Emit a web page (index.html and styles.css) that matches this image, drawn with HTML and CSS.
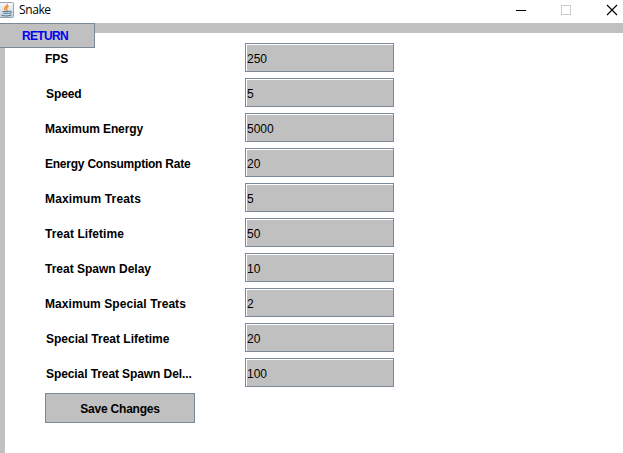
FILE: index.html
```html
<!DOCTYPE html>
<html lang="en">
<head>
<meta charset="utf-8">
<title>Snake</title>
<link rel="stylesheet" href="styles.css">
</head>
<body>
<header class="titlebar">
  <svg class="app-icon" width="14" height="17" viewBox="0 0 14 17">
    <defs><linearGradient id="tile" x2="0" y2="1"><stop stop-color="#f8fafb"/><stop offset="1" stop-color="#c4d0dc"/></linearGradient></defs>
    <path d="M0 .5H12.5Q13.5 .5 13.5 1.5V14.5Q13.5 15.5 12.5 15.5H0" fill="url(#tile)" stroke="#93a3b3"/>
    <path d="M7.2 2Q7.8 3.5 5.4 4.9Q3.6 6.3 5.6 8.3M8.7 4.3Q5.2 5.8 6.9 7.2Q7.5 8 6.5 8.7" fill="none" stroke="#ee8524" stroke-width="1.2"/>
    <path d="M2.5 9.5H9M3.3 11.3H8.6M9 9.3Q11.8 8.8 11 10.5Q10.4 11.6 8.9 11.8M1.5 13.2Q6 14.8 11.5 13" fill="none" stroke="#507997" stroke-width="1.1"/>
  </svg>
  <span class="title">Snake</span>
  <svg class="controls" width="103" height="20" viewBox="0 0 103 20" fill="none" shape-rendering="crispEdges">
    <path d="M-4 10.5H6" stroke="#000"/>
    <rect x="41.5" y="5.5" width="9" height="9" stroke="#ccc"/>
    <path d="M87 5L97 15M97 5L87 15" stroke="#000" shape-rendering="auto" stroke-width="1.1"/>
  </svg>
</header>
<main class="panel">
  <button class="button return">RETURN</button>
  <form class="settings">
    <label class="row"><span class="label snug">FPS</span><input class="field" value="250"></label>
    <label class="row"><span class="label inset snug">Speed</span><input class="field" value="5"></label>
    <label class="row"><span class="label snug">Maximum Energy</span><input class="field" value="5000"></label>
    <label class="row"><span class="label tight">Energy Consumption Rate</span><input class="field" value="20"></label>
    <label class="row"><span class="label wide">Maximum Treats</span><input class="field" value="5"></label>
    <label class="row"><span class="label roomy">Treat Lifetime</span><input class="field" value="50"></label>
    <label class="row"><span class="label">Treat Spawn Delay</span><input class="field" value="10"></label>
    <label class="row"><span class="label roomy">Maximum Special Treats</span><input class="field" value="2"></label>
    <label class="row"><span class="label inset">Special Treat Lifetime</span><input class="field" value="20"></label>
    <label class="row"><span class="label inset snug">Special Treat Spawn Del...</span><input class="field" value="100"></label>
    <button class="button save" type="button">Save Changes</button>
  </form>
</main>
</body>
</html>
```
FILE: styles.css
```css
* { box-sizing: border-box; }
body {
  margin: 0;
  height: 453px;
  overflow: hidden;
  background: #fff;
  color: #000;
  font: 12px "Liberation Sans", Arial, sans-serif;
}
.titlebar {
  display: flex;
  height: 23px;
}
.app-icon { margin-top: 2px; }
.title {
  margin-left: 5px;
  font: 12px/20px "Open Sans", "Noto Sans", sans-serif;
  letter-spacing: -0.4px;
}
.controls {
  margin-left: auto;
  overflow: visible;
}
.panel {
  height: 430px;
  border-top: 10px solid #c0c0c0;
  border-left: 5px solid #c0c0c0;
}
.button {
  display: block;
  padding: 0;
  border: 1px solid #7a8a99;
  border-radius: 0;
  background: #c0c0c0;
  color: #000;
  font: bold 12px "Liberation Sans", Arial, sans-serif;
}
.return {
  width: 100px;
  height: 25px;
  margin: -10px 0 0 -10px;
  color: #0000f0;
  letter-spacing: -0.65px;
}
.settings {
  display: grid;
  grid-auto-rows: 30px;
  row-gap: 5px;
  margin: -5px 0 0 40px;
}
.row {
  display: grid;
  grid-template-columns: 200px 149px;
  align-items: center;
}
.label {
  padding-top: 2px;
  font-weight: bold;
  white-space: nowrap;
}
.inset { padding-left: 1px; }
.tight { letter-spacing: -0.23px; }
.snug { letter-spacing: -0.09px; }
.roomy { letter-spacing: 0.07px; }
.wide { letter-spacing: 0.14px; }
.field {
  align-self: start;
  width: 149px;
  height: 29px;
  padding: 2px 1px 0;
  border: 1px solid #7a8a99;
  border-radius: 0;
  outline: 0;
  background: #c0c0c0;
  box-shadow: inset 1px 1px #fff;
  color: #000;
  font: 12px "Liberation Sans", Arial, sans-serif;
}
.save {
  width: 150px;
  height: 30px;
  padding-top: 2px;
  letter-spacing: -0.2px;
}
```
